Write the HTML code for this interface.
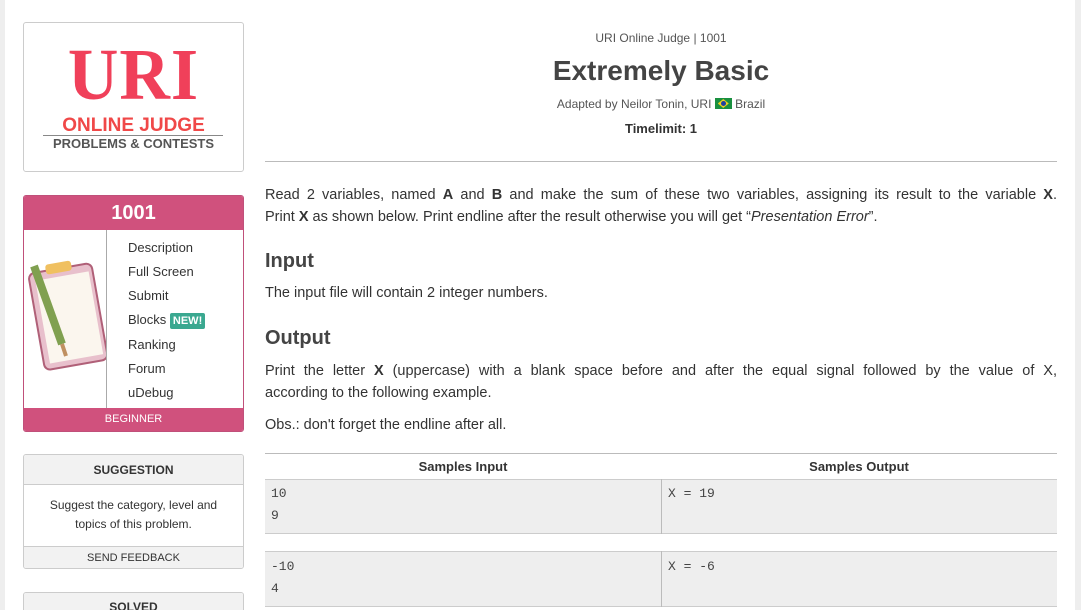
<!DOCTYPE html>
<html><head><meta charset="utf-8"><style>
*{margin:0;padding:0;box-sizing:border-box}
html,body{width:1081px;height:610px;overflow:hidden}
body{background:#fff;font-family:"Liberation Sans",sans-serif;color:#333;position:relative}
.edge{position:absolute;top:0;bottom:0;width:5px;background:#eee}
.box{position:absolute;left:23px;width:221px;border:1px solid #ccc;border-radius:3px;background:#fff;overflow:hidden}
.a{position:absolute;white-space:nowrap}
.c{text-align:center}
.m{font-family:"Liberation Mono",monospace;font-size:13px;color:#444;line-height:22px}
.j{text-align:justify;text-align-last:justify;width:792px;display:block}
</style></head><body>
<div class="edge" style="left:0"></div><div class="edge" style="right:0;width:6px"></div>

<div class="box" style="top:22px;height:150px">
 <div class="a c" style="left:0;width:219px;top:18px;font-family:'Liberation Serif',serif;font-weight:bold;font-size:70px;color:#f0405a;letter-spacing:1px;line-height:70px;transform:scaleY(1.05)">URI</div>
 <div class="a c" style="left:0;width:219px;top:92px;font-weight:bold;font-size:19px;color:#f04848">ONLINE JUDGE</div>
 <div class="a" style="left:19px;top:112px;width:180px;border-top:1px solid #888"></div>
 <div class="a c" style="left:0;width:219px;top:113px;font-weight:bold;font-size:13px;color:#555">PROBLEMS &amp; CONTESTS</div>
</div>

<div class="box" style="top:195px;height:237px;border-color:#c0507a">
 <div style="height:34px;background:#d0517d;color:#fff;font-weight:bold;font-size:20px;text-align:center;line-height:34px">1001</div>
 <div class="a" style="left:82px;top:34px;height:178px;border-left:1px solid #aaa"></div>
 <svg class="a" style="left:2px;top:60px" width="80" height="120" viewBox="0 0 80 120">
  <rect x="10" y="12" width="64" height="98" rx="6" fill="#e8c0cc" stroke="#b06078" stroke-width="2" transform="rotate(-10 40 60)"/>
  <rect x="16" y="20" width="54" height="84" fill="#fbf6ee" transform="rotate(-10 40 60)"/>
  <rect x="28" y="6" width="26" height="10" rx="3" fill="#f0c060" transform="rotate(-10 40 60)"/>
  <path d="M8 10 L36 88" stroke="#80a050" stroke-width="8"/><path d="M36 88 L40 100" stroke="#c09060" stroke-width="4"/>
 </svg>
 <div class="a" style="left:104px;top:40px;font-size:13px;line-height:24px;color:#333">Description<br>Full Screen<br>Submit<br>Blocks <span style="background:#3aa890;color:#fff;font-weight:bold;font-size:11px;padding:2px 3px;border-radius:2px">NEW!</span><br>Ranking<br>Forum<br>uDebug</div>
 <div class="a c" style="left:0;right:0;bottom:0;height:23px;background:#d0517d;color:#fff;font-size:11px;line-height:23px">BEGINNER</div>
</div>

<div class="box" style="top:454px;height:115px">
 <div style="height:30px;background:#f2f2f2;border-bottom:1px solid #ccc;text-align:center;font-weight:bold;font-size:12px;line-height:30px;color:#333">SUGGESTION</div>
 <div class="c" style="font-size:12px;line-height:19px;padding-top:11px;height:61px;color:#333">Suggest the category, level and<br>topics of this problem.</div>
 <div class="c" style="border-top:1px solid #ccc;background:#f2f2f2;font-size:11px;line-height:22px;height:23px">SEND FEEDBACK</div>
</div>
<div class="box" style="top:592px;height:40px"><div style="height:30px;background:#f2f2f2;text-align:center;font-weight:bold;font-size:12px;line-height:28px">SOLVED</div></div>

<div class="a c" style="left:265px;width:792px;top:31px;font-size:12px;color:#555">URI Online Judge | 1001</div>
<div class="a c" style="left:265px;width:792px;top:55px;font-size:28px;font-weight:bold;color:#444">Extremely Basic</div>
<div class="a c" style="left:265px;width:792px;top:97px;font-size:12px;color:#555">Adapted by Neilor Tonin, URI <span style="display:inline-block;width:17px;height:11px;background:#1a9040;vertical-align:-1px;position:relative"><span style="position:absolute;left:3px;top:1px;width:11px;height:9px;background:#f0d020;clip-path:polygon(50% 0,100% 50%,50% 100%,0 50%)"></span><span style="position:absolute;left:6px;top:3px;width:5px;height:5px;border-radius:50%;background:#2040a0"></span></span> Brazil</div>
<div class="a c" style="left:265px;width:792px;top:121px;font-size:13px;font-weight:bold;color:#333">Timelimit: 1</div>
<div class="a" style="left:265px;width:792px;top:161px;border-top:1px solid #bbb"></div>

<div class="a" style="left:265px;top:184px;font-size:14.5px;line-height:22px;color:#333">
 <span class="j">Read 2 variables, named <b>A</b> and <b>B</b> and make the sum of these two variables, assigning its result to the variable <b>X</b>.</span>
 <span style="display:block">Print <b>X</b> as shown below. Print endline after the result otherwise you will get “<i>Presentation Error</i>”.</span>
</div>
<div class="a" style="left:265px;top:250px;font-size:20px;font-weight:bold;color:#444">Input</div>
<div class="a" style="left:265px;top:285px;font-size:14.5px;color:#333">The input file will contain 2 integer numbers.</div>
<div class="a" style="left:265px;top:327px;font-size:20px;font-weight:bold;color:#444">Output</div>
<div class="a" style="left:265px;top:360px;font-size:14.5px;line-height:22px;color:#333">
 <span class="j">Print the letter <b>X</b> (uppercase) with a blank space before and after the equal signal followed by the value of X,</span>
 <span style="display:block">according to the following example.</span>
</div>
<div class="a" style="left:265px;top:417px;font-size:14.5px;color:#333">Obs.: don't forget the endline after all.</div>

<div class="a" style="left:265px;top:453px;width:792px;border-top:1px solid #bbb"></div>
<div class="a c" style="left:265px;width:396px;top:459px;font-size:13px;font-weight:bold;color:#333">Samples Input</div>
<div class="a c" style="left:661px;width:396px;top:459px;font-size:13px;font-weight:bold;color:#333">Samples Output</div>
<div class="a" style="left:265px;top:479px;width:792px;height:55px;background:#eee;border-top:1px solid #ccc;border-bottom:1px solid #ccc"></div>
<div class="a" style="left:661px;top:479px;height:55px;border-left:1px solid #bbb"></div>
<div class="a m" style="left:271px;top:483px">10<br>9</div>
<div class="a m" style="left:668px;top:483px">X = 19</div>
<div class="a" style="left:265px;top:551px;width:792px;height:56px;background:#eee;border-top:1px solid #ccc;border-bottom:1px solid #ccc"></div>
<div class="a" style="left:661px;top:551px;height:56px;border-left:1px solid #bbb"></div>
<div class="a m" style="left:271px;top:556px">-10<br>4</div>
<div class="a m" style="left:668px;top:556px">X = -6</div>
</body></html>
